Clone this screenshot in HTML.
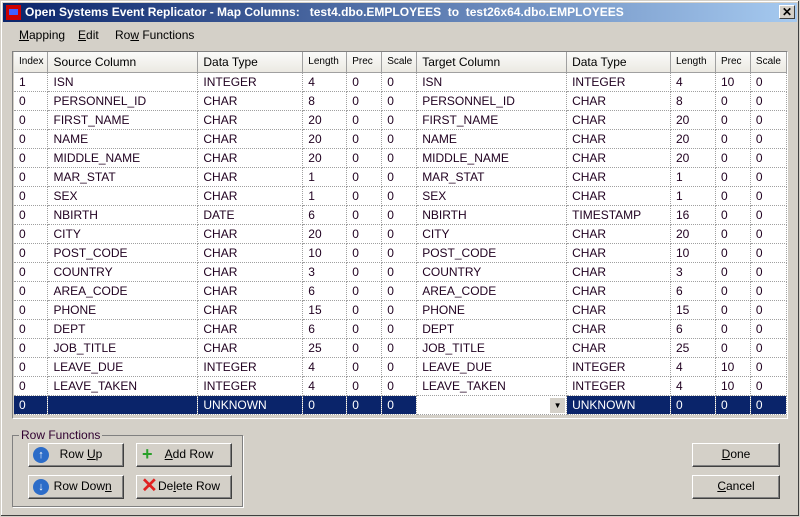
<!DOCTYPE html>
<html><head><style>
*{margin:0;padding:0;box-sizing:border-box}
body{width:800px;height:517px;background:#d4d0c8;font-family:"Liberation Sans",sans-serif;font-size:12px;color:#000;position:relative;overflow:hidden}
.win{position:absolute;left:0;top:0;width:800px;height:517px;border:1px solid #d4d0c8;box-shadow:inset -1px -1px #404040,inset 1px 1px #fff}
.title{position:absolute;left:3px;top:3px;width:794px;height:19px;background:linear-gradient(90deg,#0a246a,#a6caf0);color:#fff;font-weight:bold;font-size:12px;line-height:19px;padding-left:22px}
.ic{position:absolute;left:3px;top:2px;width:15px;height:15px;background:#c00}
.ic:after{content:"";position:absolute;left:3px;top:4px;width:9px;height:6px;background:#4060ff}
.x{position:absolute;right:2px;top:2px;width:16px;height:14px;background:#d4d0c8;border:1px solid;border-color:#fff #404040 #404040 #fff;color:#000;font-size:12px;line-height:12px;text-align:center;padding:0}
.menu{position:absolute;top:28px;font-size:12px}
.grid{position:absolute;left:12px;top:51px;width:776px;height:368px;background:#d4d0c8;border:1px solid;border-color:#808080 #fff #fff #808080;overflow:hidden}
table{position:absolute;left:1px;top:0;border-collapse:collapse;table-layout:fixed;background:#fff}
th{height:20px;background:linear-gradient(#fbfbfa,#ebe9e2);font-weight:normal;text-align:left;padding-left:5px;border-right:1px solid #a0a0a0;border-bottom:1px solid #a0a0a0;font-size:12px;white-space:nowrap;overflow:hidden;line-height:12px}
th.s{font-size:10px}
td{height:19px;padding-left:5px;border-right:1px dotted #a0a0a0;border-bottom:1px dotted #a0a0a0;white-space:nowrap;overflow:hidden;color:#200020;line-height:14px}
tr.sel td{background:#0a246a;color:#fff}
.grp{position:absolute;left:12px;top:435px;width:231px;height:72px;border:1px solid #808080;box-shadow:1px 1px #fff}
.grp span{position:absolute;left:6px;top:-8px;background:#d4d0c8;padding:0 2px;color:#300030}
.btn{position:absolute;width:96px;height:24px;background:#d4d0c8;border:1px solid;border-color:#fff #404040 #404040 #fff;box-shadow:inset -1px -1px #808080;font-size:12px;line-height:21px;text-align:center}
.cir{position:absolute;left:4px;top:3px;width:16px;height:16px;border-radius:50%;background:#2c6cc8;color:#fff;font-size:11px;line-height:16px;font-weight:bold;text-align:center}
</style></head><body>
<div class="win"></div>
<div class="title"><div class="ic"></div>Open Systems Event Replicator - Map Columns:&nbsp;&nbsp; test4.dbo.EMPLOYEES&nbsp; to&nbsp; test26x64.dbo.EMPLOYEES<div class="x">✕</div></div>
<div class="menu" style="left:19px"><u>M</u>apping</div>
<div class="menu" style="left:78px"><u>E</u>dit</div>
<div class="menu" style="left:115px">Ro<u>w</u> Functions</div>
<div class="grid">
<table>
<colgroup><col style="width:34px"><col style="width:150px"><col style="width:105px"><col style="width:44px"><col style="width:35px"><col style="width:35px"><col style="width:150px"><col style="width:104px"><col style="width:45px"><col style="width:35px"><col style="width:36px"></colgroup>
<tr><th class="s">Index</th><th>Source Column</th><th>Data Type</th><th class="s">Length</th><th class="s">Prec</th><th class="s">Scale</th><th>Target Column</th><th>Data Type</th><th class="s">Length</th><th class="s">Prec</th><th class="s">Scale</th></tr>
<tr><td>1</td><td>ISN</td><td>INTEGER</td><td>4</td><td>0</td><td>0</td><td>ISN</td><td>INTEGER</td><td>4</td><td>10</td><td>0</td></tr>
<tr><td>0</td><td>PERSONNEL_ID</td><td>CHAR</td><td>8</td><td>0</td><td>0</td><td>PERSONNEL_ID</td><td>CHAR</td><td>8</td><td>0</td><td>0</td></tr>
<tr><td>0</td><td>FIRST_NAME</td><td>CHAR</td><td>20</td><td>0</td><td>0</td><td>FIRST_NAME</td><td>CHAR</td><td>20</td><td>0</td><td>0</td></tr>
<tr><td>0</td><td>NAME</td><td>CHAR</td><td>20</td><td>0</td><td>0</td><td>NAME</td><td>CHAR</td><td>20</td><td>0</td><td>0</td></tr>
<tr><td>0</td><td>MIDDLE_NAME</td><td>CHAR</td><td>20</td><td>0</td><td>0</td><td>MIDDLE_NAME</td><td>CHAR</td><td>20</td><td>0</td><td>0</td></tr>
<tr><td>0</td><td>MAR_STAT</td><td>CHAR</td><td>1</td><td>0</td><td>0</td><td>MAR_STAT</td><td>CHAR</td><td>1</td><td>0</td><td>0</td></tr>
<tr><td>0</td><td>SEX</td><td>CHAR</td><td>1</td><td>0</td><td>0</td><td>SEX</td><td>CHAR</td><td>1</td><td>0</td><td>0</td></tr>
<tr><td>0</td><td>NBIRTH</td><td>DATE</td><td>6</td><td>0</td><td>0</td><td>NBIRTH</td><td>TIMESTAMP</td><td>16</td><td>0</td><td>0</td></tr>
<tr><td>0</td><td>CITY</td><td>CHAR</td><td>20</td><td>0</td><td>0</td><td>CITY</td><td>CHAR</td><td>20</td><td>0</td><td>0</td></tr>
<tr><td>0</td><td>POST_CODE</td><td>CHAR</td><td>10</td><td>0</td><td>0</td><td>POST_CODE</td><td>CHAR</td><td>10</td><td>0</td><td>0</td></tr>
<tr><td>0</td><td>COUNTRY</td><td>CHAR</td><td>3</td><td>0</td><td>0</td><td>COUNTRY</td><td>CHAR</td><td>3</td><td>0</td><td>0</td></tr>
<tr><td>0</td><td>AREA_CODE</td><td>CHAR</td><td>6</td><td>0</td><td>0</td><td>AREA_CODE</td><td>CHAR</td><td>6</td><td>0</td><td>0</td></tr>
<tr><td>0</td><td>PHONE</td><td>CHAR</td><td>15</td><td>0</td><td>0</td><td>PHONE</td><td>CHAR</td><td>15</td><td>0</td><td>0</td></tr>
<tr><td>0</td><td>DEPT</td><td>CHAR</td><td>6</td><td>0</td><td>0</td><td>DEPT</td><td>CHAR</td><td>6</td><td>0</td><td>0</td></tr>
<tr><td>0</td><td>JOB_TITLE</td><td>CHAR</td><td>25</td><td>0</td><td>0</td><td>JOB_TITLE</td><td>CHAR</td><td>25</td><td>0</td><td>0</td></tr>
<tr><td>0</td><td>LEAVE_DUE</td><td>INTEGER</td><td>4</td><td>0</td><td>0</td><td>LEAVE_DUE</td><td>INTEGER</td><td>4</td><td>10</td><td>0</td></tr>
<tr><td>0</td><td>LEAVE_TAKEN</td><td>INTEGER</td><td>4</td><td>0</td><td>0</td><td>LEAVE_TAKEN</td><td>INTEGER</td><td>4</td><td>10</td><td>0</td></tr>
<tr class="sel"><td>0</td><td></td><td>UNKNOWN</td><td>0</td><td>0</td><td>0</td><td style="background:#fff;padding:0;position:relative"><div style="position:absolute;right:1px;top:2px;width:15px;height:15px;background:#d4d0c8;color:#000;font-size:8px;text-align:center;line-height:15px">▼</div></td><td>UNKNOWN</td><td>0</td><td>0</td><td>0</td></tr>
</table>
</div>
<div class="grp"><span>Row Functions</span></div>
<div class="btn" style="left:28px;top:443px"><div class="cir">↑</div>&nbsp;&nbsp;&nbsp;Row <u>U</u>p</div>
<div class="btn" style="left:28px;top:475px"><div class="cir">↓</div>&nbsp;&nbsp;&nbsp;&nbsp;Row Dow<u>n</u></div>
<div class="btn" style="left:136px;top:443px"><span style="position:absolute;left:5px;top:0;color:#2aa02a;font-weight:bold;font-size:18px">+</span>&nbsp;&nbsp;&nbsp;<u>A</u>dd Row</div>
<div class="btn" style="left:136px;top:475px"><span style="position:absolute;left:4px;top:0;color:#e02020;font-weight:bold;font-size:20px">✕</span>&nbsp;&nbsp;&nbsp;De<u>l</u>ete Row</div>
<div class="btn" style="left:692px;top:443px;width:88px"><u>D</u>one</div>
<div class="btn" style="left:692px;top:475px;width:88px"><u>C</u>ancel</div>
</body></html>
